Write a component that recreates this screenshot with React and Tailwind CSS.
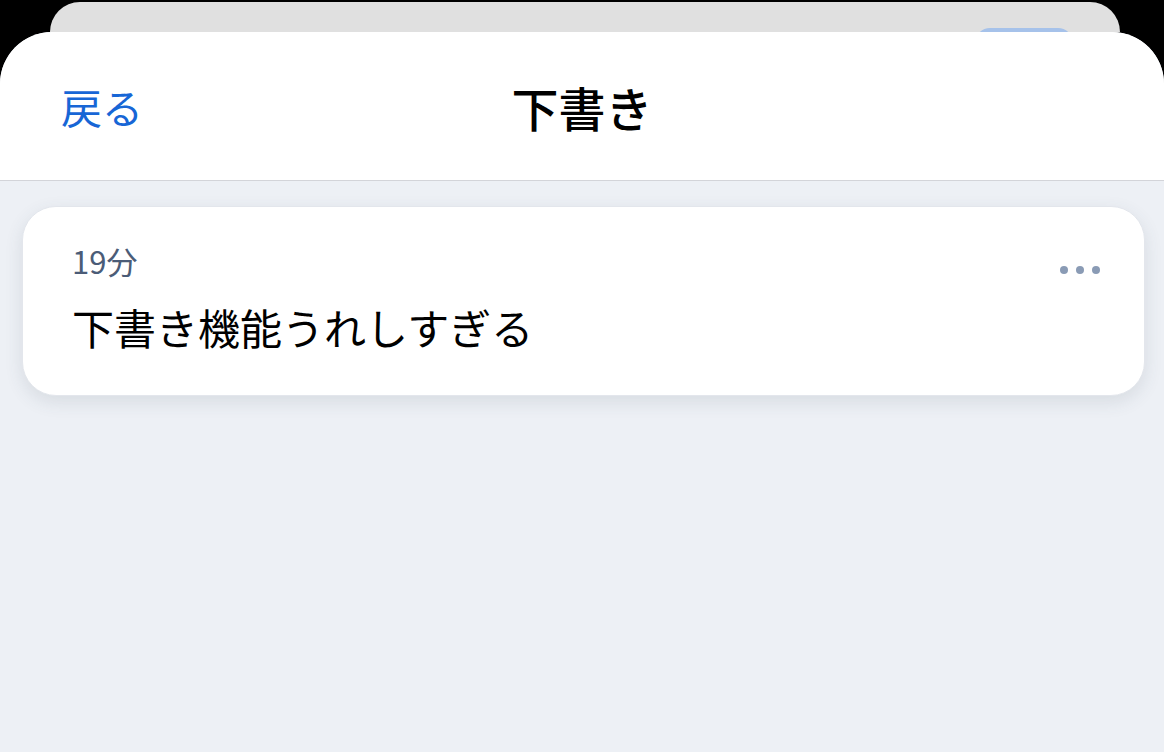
const jp = { fontFamily: '"Noto Sans CJK JP", "Noto Sans", sans-serif' };

function MoreDots() {
  return (
    <div className="flex items-center gap-[8px]">
      <span className="h-[8px] w-[8px] rounded-full bg-[#8a9bb5]" />
      <span className="h-[8px] w-[8px] rounded-full bg-[#8a9bb5]" />
      <span className="h-[8px] w-[8px] rounded-full bg-[#8a9bb5]" />
    </div>
  );
}

function DraftCard({ time, text }) {
  return (
    <div className="flex items-start justify-between rounded-[34px] border border-[#e3e6ec] bg-white pl-[49px] pr-[44px] pt-[35px] pb-[42px] shadow-[0_6px_18px_rgba(60,70,90,0.12)]">
      <div className="flex flex-col gap-[21px]">
        <span className="text-[31px] leading-[38px] text-[#4b5c77]">{time}</span>
        <span className="text-[42px] leading-[52px] text-black">{text}</span>
      </div>
      <div className="pt-[24px]">
        <MoreDots />
      </div>
    </div>
  );
}

export default function App() {
  return (
    <div className="flex h-[752px] w-full flex-col overflow-hidden bg-black pt-[2px]" style={jp}>
      <div className="mx-[44px] ml-[50px] h-[30px] overflow-hidden rounded-t-[34px] bg-[#e0e0e0] pl-[925px] pt-[26px]">
        <div className="h-[30px] w-[98px] rounded-full bg-[#a6c2ea]" />
      </div>

      <div className="flex flex-1 flex-col overflow-hidden rounded-t-[52px] bg-[#edf0f5]">
        <header className="grid h-[149px] grid-cols-[1fr_auto_1fr] items-center border-b border-[#d3d4d9] bg-white px-[61px]">
          <button type="button" className="justify-self-start text-[41px] leading-none text-[#1766d6]">
            戻る
          </button>
          <h1 className="text-[47px] font-medium leading-none text-black">下書き</h1>
          <div />
        </header>

        <div className="pl-[22px] pr-[19px] pt-[25px]">
          <DraftCard time="19分" text="下書き機能うれしすぎる" />
        </div>
      </div>
    </div>
  );
}
